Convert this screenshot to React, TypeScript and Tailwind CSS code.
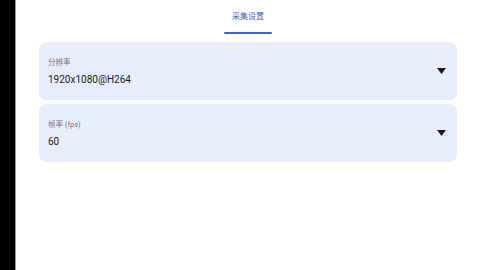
import { useState } from "react";

const fields = [
  { label: "分辨率", value: "1920x1080@H264" },
  { label: "帧率 (fps)", value: "60" },
];

function Caret() {
  return (
    <svg width="9" height="6" viewBox="0 0 9 6" className="shrink-0">
      <path d="M0 0 H9 L4.5 6 Z" fill="#1c1b1f" />
    </svg>
  );
}

export default function App() {
  const [tab] = useState("采集设置");

  return (
    <div
      className="flex h-[270px] w-[480px] overflow-hidden bg-white"
      style={{ fontFamily: 'Roboto, "Noto Sans CJK SC", sans-serif' }}
    >
      <div className="w-[15px] shrink-0 bg-black" />
      <div className="w-px shrink-0 bg-[#9a9a9a]" />
      <div className="flex flex-1 flex-col">
        <div className="flex justify-center">
          <div className="flex w-[48px] flex-col items-center">
            <div className="pt-[12px] pb-[10px] text-[8px] leading-[10px] text-[#3c67c9]">
              {tab}
            </div>
            <div className="h-[2px] w-full rounded-full bg-[#3c67c9]" />
          </div>
        </div>
        <div className="mx-[23px] mt-[8px] flex flex-col gap-[4px]">
          {fields.map((f) => (
            <div
              key={f.label}
              className="flex h-[58px] items-center rounded-[8px] bg-[#e8edfb] pl-[9px] pr-[11px]"
            >
              <div className="flex flex-1 flex-col pt-[1px]">
                <div className="text-[7.5px] leading-[10px] text-[#77777c]">
                  {f.label}
                </div>
                <div className="mt-[6px] text-[10px] leading-[12px] text-[#1c1b1f]">
                  {f.value}
                </div>
              </div>
              <Caret />
            </div>
          ))}
        </div>
      </div>
    </div>
  );
}
